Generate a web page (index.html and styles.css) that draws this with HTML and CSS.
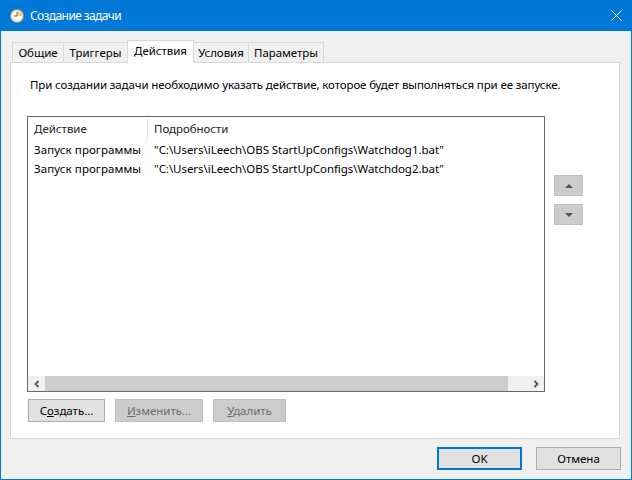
FILE: index.html
```html
<!DOCTYPE html>
<html lang="ru">
<head>
<meta charset="utf-8">
<title>Создание задачи</title>
<link rel="stylesheet" href="styles.css">
</head>
<body>
<div class="window">
  <header class="titlebar">
    <svg class="clock" width="16" height="16" viewBox="0 0 16 16">
      <circle cx="8" cy="8" r="6.7" fill="#d8d4c8" stroke="#8d8a80" stroke-width="1"/>
      <circle cx="8" cy="8" r="5.1" fill="#fbfaf4"/>
      <path d="M8 8V2.9A5.1 5.1 0 0 1 13.1 8Z" fill="#f2cf7c"/>
      <path d="M8 4.2V8H4.8" fill="none" stroke="#666" stroke-width="1"/>
    </svg>
    <span class="title">Создание задачи</span>
    <svg class="close" width="11" height="11" viewBox="0 0 11 11">
      <path d="M.5.5l10 10M10.5.5l-10 10" stroke="#fff" stroke-width="1" fill="none"/>
    </svg>
  </header>
  <main class="content">
    <nav class="tabs">
      <span class="tab tab-a">Общие</span>
      <span class="tab tab-b">Триггеры</span>
      <span class="tab active">Действия</span>
      <span class="tab tab-c">Условия</span>
      <span class="tab tab-d">Параметры</span>
    </nav>
    <section class="panel">
      <p class="hint">При создании задачи необходимо указать действие, которое будет выполняться при ее запуске.</p>
      <div class="work">
        <div class="listcol">
          <div class="list">
            <div class="rows">
              <div class="row head"><span class="c1 sep">Действие</span><span class="c2">Подробности</span></div>
              <div class="row"><span class="c1">Запуск программы</span><span class="c2">"C:\Users\iLeech\OBS StartUpConfigs\Watchdog1.bat"</span></div>
              <div class="row"><span class="c1">Запуск программы</span><span class="c2">"C:\Users\iLeech\OBS StartUpConfigs\Watchdog2.bat"</span></div>
            </div>
            <div class="hscroll">
              <span class="arrowbox"><svg width="8" height="8" viewBox="0 0 8 8"><path d="M5.5 1L2.5 4l3 3" fill="none" stroke="#555" stroke-width="1.8"/></svg></span>
              <span class="thumb"></span>
              <span class="gap"></span>
              <span class="arrowbox"><svg width="8" height="8" viewBox="0 0 8 8"><path d="M2.5 1l3 3-3 3" fill="none" stroke="#555" stroke-width="1.8"/></svg></span>
            </div>
          </div>
          <div class="actions">
            <button class="btn b-create"><span>С<u>о</u>здать...</span></button>
            <button class="btn off b-edit"><span><u>И</u>зменить...</span></button>
            <button class="btn off b-del"><span><u>У</u>далить</span></button>
          </div>
        </div>
        <div class="updown">
          <button class="move"><svg width="8" height="4" viewBox="0 0 8 4"><path d="M4 0l4 4H0z" fill="#555"/></svg></button>
          <button class="move"><svg width="8" height="4" viewBox="0 0 8 4"><path d="M0 0h8L4 4z" fill="#555"/></svg></button>
        </div>
      </div>
    </section>
    <footer class="footer">
      <button class="btn dlg default">OK</button>
      <button class="btn dlg">Отмена</button>
    </footer>
  </main>
</div>
</body>
</html>
```
FILE: styles.css
```css
* { box-sizing: border-box; }
html, body { margin: 0; height: 100%; }
body { font: 11.5px/16px "Noto Sans", "Open Sans", sans-serif; color: #000; }
.window {
  width: 632px; height: 480px; display: flex; flex-direction: column;
  border: 1px solid #0078d7; border-top: 0; background: #f0f0f0;
}
.titlebar {
  height: 31px; background: #0078d7; color: #fff; display: flex; align-items: center;
  padding: 0 10px 0 9px; margin: 0 -1px; flex: none;
}
.clock { flex: none; }
.title { margin-left: 5px; flex: 1; letter-spacing: -.6px; font-size: 12px; }
.content { flex: 1; display: flex; flex-direction: column; padding: 9px 11px 8px 9px; }
.tabs { display: flex; height: 22px; align-items: flex-end; position: relative; z-index: 1; padding-left: 3px; flex: none; }
.tab {
  height: 20px; border: 1px solid #d9d9d9; border-bottom: 0; margin-left: -1px; background: #f0f0f0;
  display: flex; align-items: center; justify-content: center; color: #000; letter-spacing: -.04px;
}
.tab-a { width: 52px; }
.tab-b { width: 65px; }
.tab-c { width: 56px; }
.tab-d { width: 76px; }
.tab.active { height: 23px; width: 67px; background: #fff; margin-bottom: -1px; padding-bottom: 2px; position: relative; }
.panel {
  height: 377px; background: #fff; border: 1px solid #d9d9d9; padding: 0 0 0 16px; flex: none;
}
.hint { margin: 14px 0 0 3px; height: 16px; white-space: nowrap; letter-spacing: -.11px; }
.work { display: flex; margin-top: 23px; }
.listcol { width: 518px; flex: none; }
.list { height: 276px; border: 1px solid #696969; display: flex; flex-direction: column; }
.rows { flex: 1; }
.row { display: flex; height: 19px; align-items: center; white-space: nowrap; letter-spacing: -.05px; }
.head { height: 24px; margin-bottom: -1px; color: #222; }
.c1 { width: 120px; padding-left: 6px; flex: none; letter-spacing: .08px; }
.c2 { padding-left: 6px; }
.sep { border-right: 1px solid #e5e5e5; height: 24px; line-height: 24px; letter-spacing: 0; }
.hscroll { height: 15px; display: flex; background: #f0f0f0; flex: none; }
.arrowbox { width: 17px; display: flex; align-items: center; justify-content: center; flex: none; }
.thumb { flex: 1; background: #cdcdcd; }
.gap { width: 19px; flex: none; }
.actions { display: flex; margin: 7px 0 0 1px; gap: 10px; }
.btn {
  font: inherit; height: 23px; padding: 0; background: #e1e1e1; border: 1px solid #adadad; color: #000; letter-spacing: -.04px;
}
.b-create { width: 77px; }
.b-edit { width: 88px; }
.b-del { width: 73px; }
.btn.off { background: #ccc; border-color: #bfbfbf; color: #6d6d6d; }
.updown { display: flex; flex-direction: column; gap: 8px; margin: 59px 0 0 9px; }
.move {
  width: 29px; height: 21px; padding: 0; background: #ccc; border: 1px solid #bfbfbf;
  display: flex; align-items: center; justify-content: center;
}
.footer { display: flex; justify-content: flex-end; gap: 14px; margin: 8px -1px 0 0; flex: none; }
.dlg { width: 85px; }
.default { border: 2px solid #0078d7; }
```
